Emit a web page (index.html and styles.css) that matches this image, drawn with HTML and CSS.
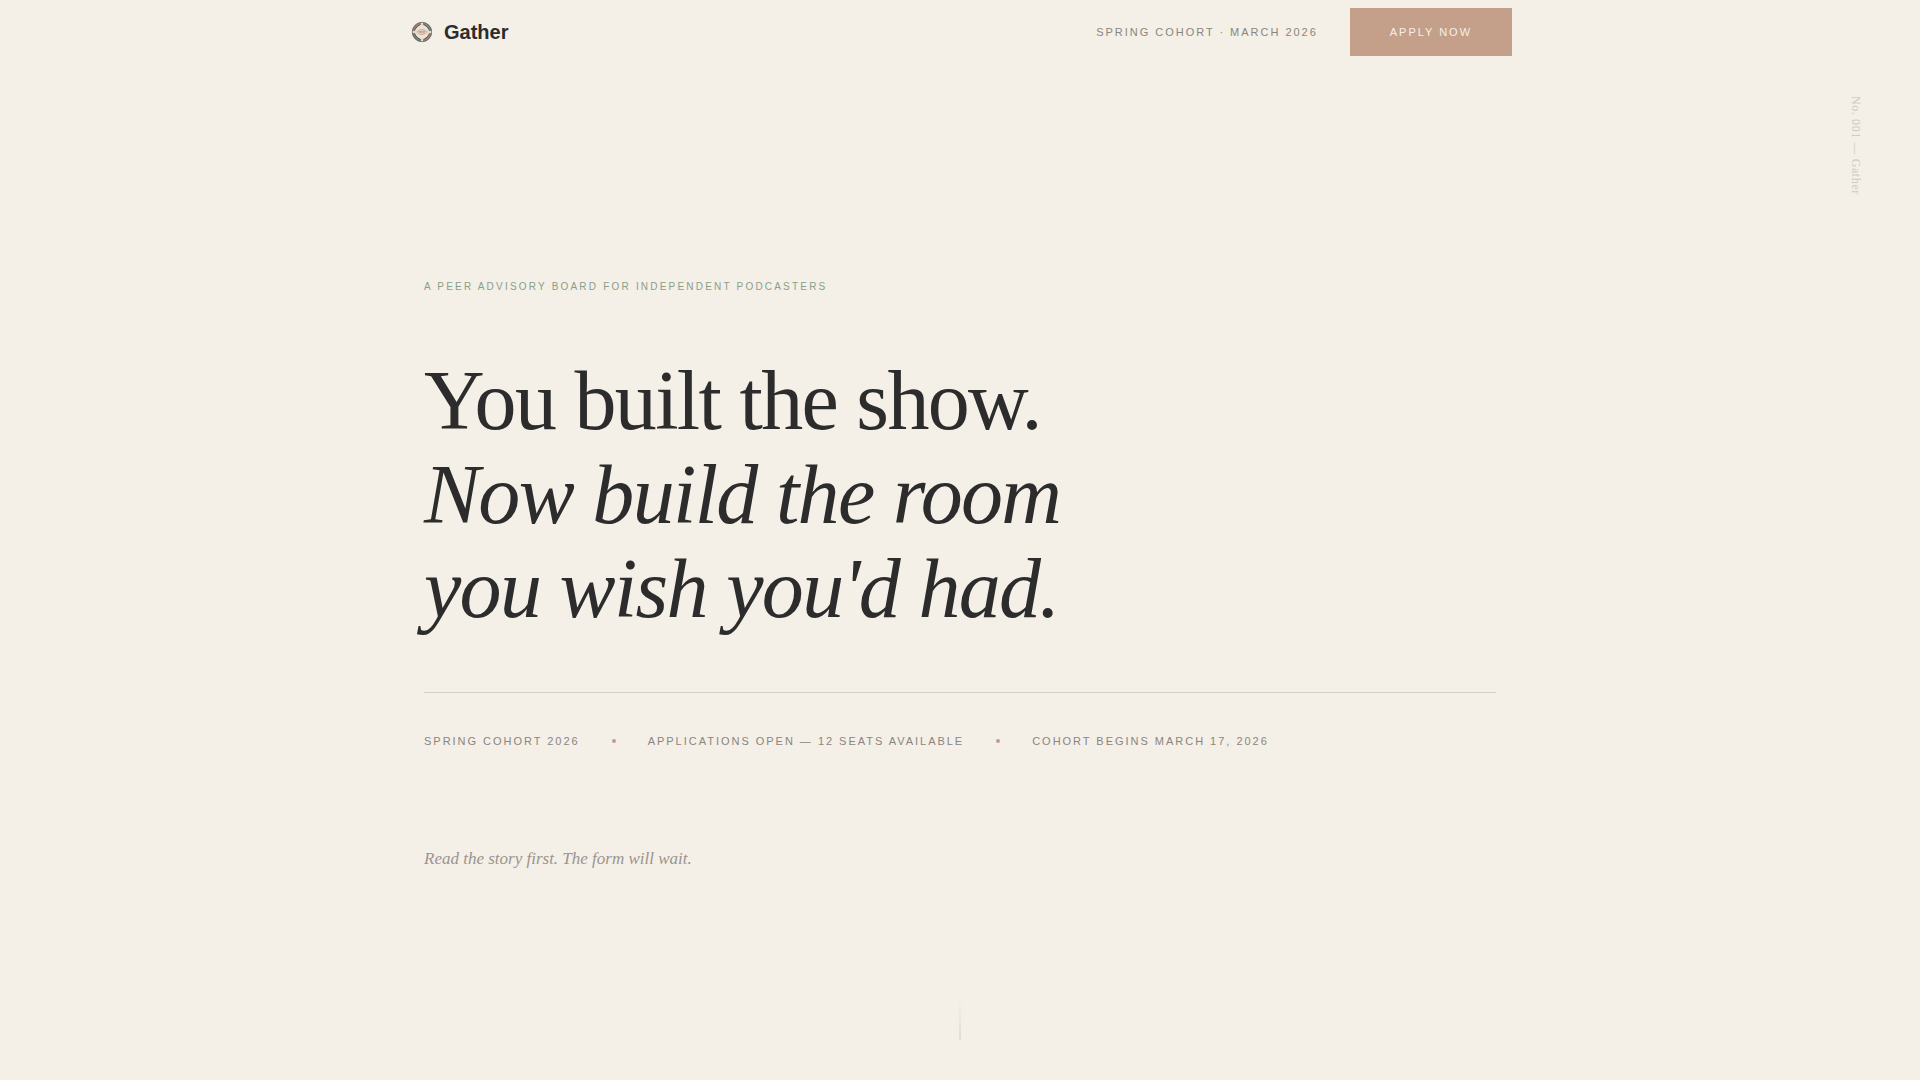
FILE: index.html
```html
<!DOCTYPE html>
<html lang="en">
<head>
<meta charset="utf-8">
<meta name="viewport" content="width=device-width, initial-scale=1">
<title>Gather</title>
<link rel="stylesheet" href="styles.css">
</head>
<body>
<header class="nav">
  <a class="brand" href="#top">
    <svg class="brand-mark" viewBox="0 0 28 28" aria-hidden="true">
      <circle cx="14" cy="14" r="10" fill="#ebe2d5"/>
      <g fill="none" stroke-width="2.8">
        <path d="M5.6 13A8.4 8.4 0 0 1 13 5.6" stroke="#9a7f74"/>
        <path d="M15 5.6A8.4 8.4 0 0 1 22.4 13" stroke="#7b857a"/>
        <path d="M22.4 15A8.4 8.4 0 0 1 15 22.4" stroke="#9a7f74"/>
        <path d="M13 22.4A8.4 8.4 0 0 1 5.6 15" stroke="#6d8076"/>
      </g>
      <circle cx="14" cy="14" r="9.7" fill="none" stroke="#6a665e" stroke-width="0.8"/>
      <path d="M6.8 11.8Q8.4 8.4 11.8 6.8M16.2 6.8Q19.6 8.4 21.2 11.8M21.2 16.2Q19.6 19.6 16.2 21.2M11.8 21.2Q8.4 19.6 6.8 16.2" fill="none" stroke="#5d5a53" stroke-width="1"/>
      <path d="M8.6 14q5.4-5.4 10.8 0-5.4 5.4-10.8 0Z" fill="#efdccd" stroke="#c4aa9a" stroke-width="0.8"/>
      <path d="M10.5 13.3h7M11 14.8h6" stroke="#c08f80" stroke-width="0.9"/>
    </svg>
    <span>Gather</span>
  </a>
  <div class="nav-side">
    <span class="label">Spring Cohort · March 2026</span>
    <button class="apply" type="button">Apply Now</button>
  </div>
</header>
<main class="hero" id="top">
  <p class="eyebrow">A Peer Advisory Board for Independent Podcasters</p>
  <h1 class="headline">You built the show.<br><em>Now build the room<br>you wish you'd had.</em></h1>
  <ul class="facts label">
    <li>Spring Cohort 2026</li>
    <li>Applications Open — 12 Seats Available</li>
    <li>Cohort Begins March 17, 2026</li>
  </ul>
  <p class="invite">Read the story first. The form will wait.</p>
</main>
<div class="scroll-cue" aria-hidden="true"></div>
<aside class="folio">No. 001 — Gather</aside>
</body>
</html>
```
FILE: styles.css
```css
* { box-sizing: border-box; }

body {
  margin: 0;
  min-height: 100vh;
  display: flex;
  flex-direction: column;
  background: #f4efe7;
  color: #2c2c2c;
  font-family: "Liberation Sans", Arial, sans-serif;
}

.nav {
  width: 100%;
  max-width: 1104px;
  height: 64px;
  margin: 0 auto;
  display: flex;
  align-items: center;
  justify-content: space-between;
}

.brand {
  display: flex;
  align-items: center;
  gap: 8px;
  color: inherit;
  font-size: 20px;
  font-weight: 700;
  line-height: 24px;
  text-decoration: none;
}

.brand-mark {
  width: 28px;
  height: 28px;
}

.nav-side {
  display: flex;
  align-items: center;
  gap: 32px;
}

.label {
  color: #8a8580;
  font-size: 11px;
  line-height: 16px;
  letter-spacing: 0.18em;
  text-transform: uppercase;
}

.apply {
  height: 48px;
  padding: 0 40px;
  border: 0;
  background: #c4a08a;
  color: #f4efe7;
  font: inherit;
  font-size: 11px;
  letter-spacing: 0.18em;
  text-transform: uppercase;
}

.hero {
  width: 100%;
  max-width: 1120px;
  margin: 0 auto;
  padding: 84px 24px 0;
  flex: 1;
  display: flex;
  flex-direction: column;
  justify-content: center;
}

.eyebrow {
  margin: 0 0 56px;
  color: #8b9e8b;
  font-size: 10px;
  line-height: 22px;
  letter-spacing: 0.22em;
  text-transform: uppercase;
}

.headline {
  margin: 0 0 56px;
  font-family: "Liberation Serif", "Times New Roman", serif;
  font-size: 84px;
  font-weight: 400;
  line-height: 94px;
  letter-spacing: -0.02em;
}

.facts {
  margin: 0 0 96px;
  padding: 40px 0 0;
  border-top: 1px solid #d4cfc8;
  display: flex;
  flex-wrap: wrap;
  gap: 32px;
  list-style: none;
}

.facts li {
  display: flex;
  align-items: center;
  gap: 32px;
}

.facts li + li::before {
  content: "";
  width: 4px;
  height: 4px;
  border-radius: 50%;
  background: #c49a90;
}

.invite {
  margin: 0;
  color: #9a958e;
  font-family: "Liberation Serif", "Times New Roman", serif;
  font-size: 17px;
  font-style: italic;
  line-height: 28px;
}

.scroll-cue {
  width: 2px;
  height: 40px;
  margin: 0 auto 40px;
  background: linear-gradient(to bottom, transparent, #e2dcd4);
}

.folio {
  position: absolute;
  top: 96px;
  right: 56px;
  color: #cfcac4;
  font-family: "Liberation Serif", "Times New Roman", serif;
  font-size: 12px;
  line-height: 16px;
  letter-spacing: 0.05em;
  writing-mode: vertical-rl;
}
```
